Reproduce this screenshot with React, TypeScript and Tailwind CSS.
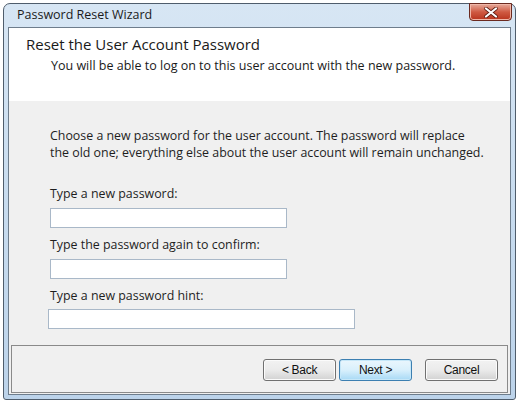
import React from 'react';

const ui = { fontFamily: '"Open Sans", "Noto Sans", sans-serif' };
const btnFont = { fontFamily: '"Liberation Sans", Arial, sans-serif' };

function Field({ label, wide }: { label: string; wide?: boolean }) {
  return (
    <div className="flex flex-col">
      <div className="h-[17px] leading-[17px] text-[12.4px] text-[#1e1e1e]">{label}</div>
      <div
        className={
          wide
            ? 'mt-[5px] -ml-[2px] h-[20px] w-[307px] border border-[#a9b8c8] bg-white'
            : 'mt-[6px] h-[20px] w-[237px] border border-[#a9b8c8] bg-white'
        }
      />
    </div>
  );
}

function WizButton({ children, primary }: { children: React.ReactNode; primary?: boolean }) {
  return (
    <button
      style={btnFont}
      className={
        primary
          ? 'flex h-[22px] w-[73px] items-center justify-center rounded-[3px] border border-[#3c7fb1] bg-gradient-to-b from-[#eaf6fd] via-[#d9f0fc] to-[#a7d9f5] text-[12px] tracking-[-0.3px] text-[#111] shadow-[inset_0_0_0_1px_#c6e7f8]'
          : 'flex h-[22px] w-[73px] items-center justify-center rounded-[3px] border border-[#707070] bg-gradient-to-b from-[#f2f2f2] via-[#ebebeb] to-[#d2d2d2] text-[12px] tracking-[-0.3px] text-[#111] shadow-[inset_0_0_0_1px_#fbfbfb]'
      }
    >
      {children}
    </button>
  );
}

export default function App() {
  return (
    <div className="h-[402px] w-[519px] bg-white pl-[3px] pr-[3px] pt-[3px] pb-[2px]" style={ui}>
      <div className="flex h-full flex-col rounded-t-[7px] rounded-b-[3px] border border-[#4f5d6c] bg-gradient-to-b from-[#d7e6f4] via-[#c8dcef] to-[#bcd3ea]">
        {/* title bar */}
        <div className="relative flex h-[23px] items-center pl-[13px]">
          <span className="text-[12.5px] text-[#1b1b1b]">Password Reset Wizard</span>
          <div className="absolute right-[3px] top-[-1px] flex h-[18px] w-[43px] items-center justify-center rounded-b-[4px] border border-[#6b2a20] bg-gradient-to-b from-[#e5a99b] via-[#cf5a42] to-[#b8321b] shadow-[inset_0_0_0_1px_#f1b7a8]">
            <svg width="14" height="11" viewBox="0 0 14 11">
              <path d="M2 1.5 L12 9.5 M12 1.5 L2 9.5" stroke="#5a1a10" strokeWidth="3.6" strokeLinecap="round" />
              <path d="M2 1.5 L12 9.5 M12 1.5 L2 9.5" stroke="#ffffff" strokeWidth="2.2" strokeLinecap="round" />
            </svg>
          </div>
        </div>

        {/* client area */}
        <div className="mx-[4px] mb-[4px] flex flex-1 flex-col border border-[#6e7d8c] bg-[#f0f0f0]">
          <div className="h-[73px] bg-white pl-[17px] pt-[6px]">
            <div className="text-[15px] leading-[20px] text-[#1a1a1a]">Reset the User Account Password</div>
            <div className="mt-[4px] pl-[25px] text-[12.5px] leading-[16px] text-[#1a1a1a]">
              You will be able to log on to this user account with the new password.
            </div>
          </div>

          <div className="flex-1 pl-[41px] pt-[26px]">
            <div className="text-[12.4px] leading-[17px] text-[#1e1e1e]">
              Choose a new password for the user account. The password will replace
              <br />
              the old one; everything else about the user account will remain unchanged.
            </div>
            <div className="mt-[24px] flex flex-col gap-[8px]">
              <Field label="Type a new password:" />
              <Field label="Type the password again to confirm:" />
              <Field label="Type a new password hint:" wide />
            </div>
          </div>

          <div className="mx-[2px] mb-[1px] flex h-[48px] items-start justify-end gap-[3px] border border-[#8a8a8a] bg-[#f0f0f0] pr-[9px] pt-[13px]">
            <WizButton>&lt; Back</WizButton>
            <WizButton primary>Next &gt;</WizButton>
            <div className="w-[7px]" />
            <WizButton>Cancel</WizButton>
          </div>
        </div>
      </div>
    </div>
  );
}
